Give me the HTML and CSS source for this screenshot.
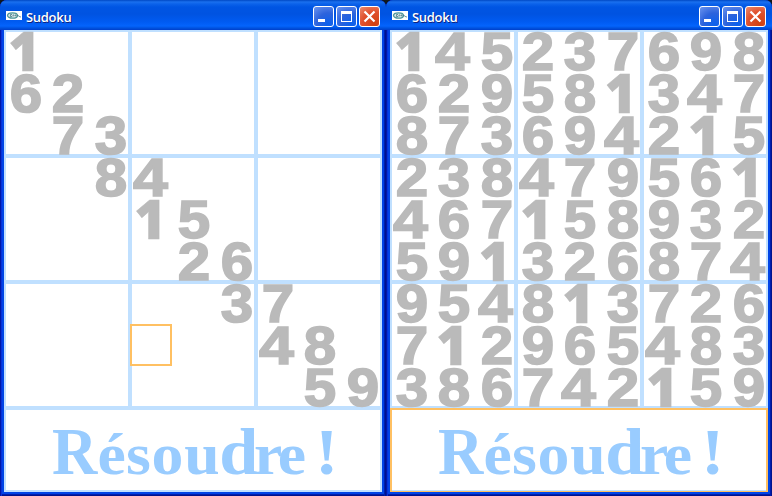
FILE: index.html
```
<!DOCTYPE html>
<html lang="fr">
<head>
<meta charset="utf-8">
<title>Sudoku</title>
<link rel="stylesheet" href="styles.css">
</head>
<body>
<svg width="0" height="0" class="defs">
  <symbol id="logo" viewBox="0 0 16 9"><path fill="#fff" d="M0 0h16v9H0z"/><ellipse cx="6.500" cy="4.500" rx="5" ry="2.700" fill="#d5e5e5" stroke="#50979a" stroke-width="1.300"/><path d="M6 3.500H4.500v2H6M7 5.500V4h1M9 5V4h1v1.500M11 4.500h1l2 1.400h1" fill="none" stroke="#467a84" stroke-width=".8"/></symbol>
  <symbol id="caption" viewBox="0 0 378 84">
    <text class="solve-text" y="66" transform="scale(1.08 1)"><tspan class="cap" x="44.500" textLength="42" lengthAdjust="spacingAndGlyphs">R</tspan><tspan x="86.500">é</tspan><tspan x="113">s</tspan><tspan x="136.500">o</tspan><tspan x="167">u</tspan><tspan class="tall" x="199.400">d</tspan><tspan x="231.500">r</tspan><tspan x="253.500">e</tspan><tspan> </tspan><tspan class="mark" x="288">!</tspan></text>
  </symbol>
</svg>
<main class="desktop" id="desktop"></main>
<script src="app.js"></script>
</body>
</html>
```
FILE: styles.css
```
body { margin: 0; background: #10181c; overflow: hidden; font-family: "Liberation Sans", Arial, sans-serif; }
.defs { display: block; position: absolute; }
.desktop { display: flex; width: 772px; height: 496px; }
.window {
  box-sizing: border-box; width: 386px; height: 496px; padding: 0 4px 4px;
  border-radius: 7px 7px 0 0; overflow: hidden; background: #0044e6;
  box-shadow: inset 1px 0 #0018a8, inset -1px 0 #00138c, inset 2px 0 #0831d9, inset -2px 0 #001dad, inset 0 -1px #00138c, inset 0 -2px #001eaf;
}
.titlebar {
  display: flex; align-items: center; height: 30px; margin: 0 -4px; padding: 2px 6px 0 6px; box-sizing: border-box;
  background: linear-gradient(#0048c4 0, #1a70ef 2px, #0b62ea 4px, #0055e3 7px, #0053e1 14px, #005bf2 22px, #0464fc 26px, #0053e0 28px, #003fcb 30px);
}
.logo { width: 16px; height: 9px; margin-bottom: 1px; }
.title { flex: 1; margin: 1px 0 0 4px; color: #fff; font: 600 13px/18px "Open Sans", sans-serif; letter-spacing: -.3px; text-shadow: 1px 1px #10247e; }
.controls { display: flex; gap: 2px; }
.control { width: 21px; height: 21px; box-sizing: border-box; border: 1px solid #fff; border-radius: 3px; background: radial-gradient(circle at 75% 90%, #0b60ed, #2d63dc 50%, #6b94ef); }
.control.close { background: radial-gradient(circle at 75% 90%, #d14110, #e0512d 55%, #ed8c70); }
.control svg { display: block; width: 19px; height: 19px; }
.board { display: grid; grid-template-columns: repeat(9, 42px); grid-auto-rows: 42px; background: #fff; }
.cell { box-sizing: border-box; display: flex; justify-content: center; border: 0 solid #c0e0ff; width: 42px; height: 42px; }
.cell.left { border-left-width: 2px; }
.cell.right { border-right-width: 2px; }
.cell.top { border-top-width: 2px; }
.cell.bottom { border-bottom-width: 2px; }
.cell.selected { border: 2px solid #ffc062; }
.digit { position: relative; flex: none; width: 42px; height: 42px; margin: 0 -6px; text-align: center; font-weight: bold; font-size: 54px; line-height: 42px; color: #bababa; -webkit-text-stroke: 1.6px #bababa; transform: scaleX(1.08); z-index: 1; }
.cell.top .digit { margin-top: -2px; }
.cell.left .digit { left: -1px; }
.cell.right .digit { left: 1.5px; }
.digit span { position: relative; left: 1px; top: -.5px; }
.digit.one { font-family: "Open Sans", sans-serif; font-weight: 800; -webkit-text-stroke: .4px #bababa; transform: none; }
.digit.one span { left: -1px; top: -1.5px; }
.digit.four { transform: scaleX(1.16); }
.digit.four span { left: -.5px; }
.solve { display: block; box-sizing: border-box; width: 378px; height: 84px; padding: 0; border: 2px solid #c0e0ff; border-radius: 0; background: #fff; }
.solve.focused { border-color: #ffc062; border-bottom-width: 1px; box-shadow: inset 0 -1px #c0e0ff; }
.solve svg { display: block; width: 378px; height: 84px; margin: -2px; }
.solve.focused svg { margin-bottom: -1px; }
.solve-text { font: bold 59px "Liberation Serif", serif; fill: #99ccff; }
.cap { font-size: 67px; }
.tall { font-size: 65px; }
.mark { font-size: 65px; }
```
FILE: app.js
```
const solved = ["145237698", "629581347", "873694215", "238479561", "467158932", "591326874", "954813726", "712965483", "386742159"];
const given = ["1........", "62.......", ".73......", "..84.....", "...15....", "....26...", ".....37..", "......48.", ".......59"];
const shapes = { 1: " one", 4: " four" };

function windowMarkup(rows, selected, focused) {
  const cells = rows.flatMap((row, r) => [...row].map((n, c) => {
    const names = ["cell"];
    if (c % 3 === 0) names.push("left");
    if (c % 3 === 2) names.push("right");
    if (r % 3 === 0) names.push("top");
    if (r % 3 === 2) names.push("bottom");
    if (selected === r * 9 + c) names.push("selected");
    return `<div class="${names.join(" ")}">${n === "." ? "" : `<div class="digit${shapes[n] || ""}"><span>${n}</span></div>`}</div>`;
  })).join("");
  return `<section class="window"><header class="titlebar"><svg class="logo"><use href="#logo"/></svg><span class="title">Sudoku</span><div class="controls">
    <div class="control"><svg viewBox="0 0 19 19"><path d="M4 12h7v3H4z" fill="#fff"/></svg></div>
    <div class="control"><svg viewBox="0 0 19 19"><path d="M4 4h11v11H4zM5 7v7h9V7z" fill="#fff" fill-rule="evenodd"/></svg></div>
    <div class="control close"><svg viewBox="0 0 19 19"><path d="M4.500 4.500l10 10m0-10l-10 10" stroke="#fff" stroke-width="2.200"/></svg></div>
    </div></header><div class="board">${cells}</div><button class="solve${focused ? " focused" : ""}" aria-label="Résoudre !"><svg><use href="#caption"/></svg></button></section>`;
}
document.getElementById("desktop").innerHTML = windowMarkup(given, 66, false) + windowMarkup(solved, -1, true);
```
